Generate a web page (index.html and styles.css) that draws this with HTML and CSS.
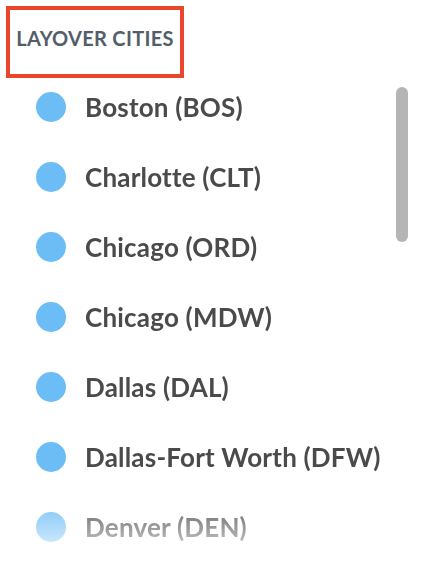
FILE: index.html
```html
<!DOCTYPE html>
<html>
<head>
<meta charset="utf-8">
<link rel="stylesheet" href="styles.css">
</head>
<body>
<div class="page">
  <div class="header">
    <h1 class="title">LAYOVER CITIES</h1>
  </div>
  <div class="list-wrap">
    <ul class="list">
      <li class="item"><span class="dot"></span><span class="name">Boston (BOS)</span></li>
      <li class="item"><span class="dot"></span><span class="name">Charlotte (CLT)</span></li>
      <li class="item"><span class="dot"></span><span class="name">Chicago (ORD)</span></li>
      <li class="item"><span class="dot"></span><span class="name">Chicago (MDW)</span></li>
      <li class="item"><span class="dot"></span><span class="name">Dallas (DAL)</span></li>
      <li class="item"><span class="dot"></span><span class="name">Dallas-Fort Worth (DFW)</span></li>
      <li class="item"><span class="dot"></span><span class="name">Denver (DEN)</span></li>
    </ul>
    <div class="scrollbar"></div>
  </div>
</div>
</body>
</html>
```

FILE: styles.css
```css
html, body {
  margin: 0;
  padding: 0;
  background: #ffffff;
}
.page {
  width: 422px;
  height: 562px;
  overflow: hidden;
  font-family: Lato, "Open Sans", sans-serif;
}
.header {
  margin: 6px 0 0 6px;
  width: 170px;
  height: 64px;
  border: 4px solid #e9462d;
  box-sizing: content-box;
  padding: 0;
  display: flex;
  justify-content: center;
}
.title {
  margin: 16px 0 0 0;
  font-size: 20px;
  line-height: 24px;
  font-weight: 700;
  color: #535e6a;
  letter-spacing: 0.3px;
}
.list-wrap {
  position: relative;
  height: 484px;
  margin-top: -6px;
}
.list {
  list-style: none;
  margin: 0;
  padding: 0 0 0 36px;
  -webkit-mask-image: linear-gradient(to bottom, #000 0, #000 420px, rgba(0,0,0,0.25) 480px);
  mask-image: linear-gradient(to bottom, #000 0, #000 420px, rgba(0,0,0,0.25) 480px);
}
.item {
  height: 70px;
  display: flex;
  align-items: center;
}
.dot {
  width: 30px;
  height: 30px;
  border-radius: 50%;
  background: #6cbdf5;
  flex: none;
}
.name {
  margin-left: 19px;
  font-size: 26px;
  font-weight: 700;
  color: #4a4a4a;
  letter-spacing: 0.2px;
}
.scrollbar {
  position: absolute;
  left: 396px;
  top: 15px;
  width: 12px;
  height: 155px;
  border-radius: 6px;
  background: #b5b5b5;
}
```
